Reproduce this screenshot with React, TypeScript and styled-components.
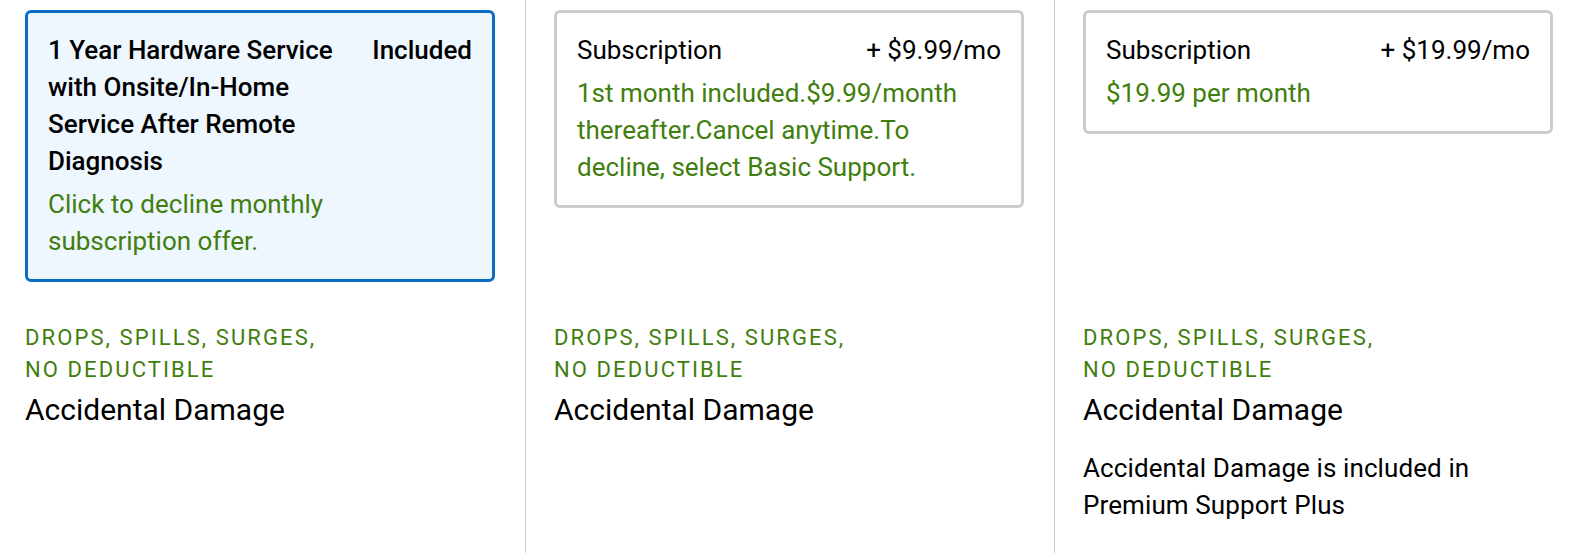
import styled, { createGlobalStyle } from 'styled-components';

const GlobalStyle = createGlobalStyle`
    body {
        margin: 0;
        background: #ffffff;
        font-family: Roboto, 'Liberation Sans', sans-serif;
        color: #000000;
    }
`;

type Plan = {
    title: string;
    price: string;
    note: string;
    selected?: boolean;
    extra?: string;
};

const plans: Plan[] = [
    {
        title: '1 Year Hardware Service with Onsite/In-Home Service After Remote Diagnosis',
        price: 'Included',
        note: 'Click to decline monthly subscription offer.',
        selected: true,
    },
    {
        title: 'Subscription',
        price: '+ $9.99/mo',
        note: '1st month included.$9.99/month thereafter.Cancel anytime.To decline, select Basic Support.',
    },
    {
        title: 'Subscription',
        price: '+ $19.99/mo',
        note: '$19.99 per month',
        extra: 'Accidental Damage is included in Premium Support Plus',
    },
];

const App = () => {
    return (
        <>
            <GlobalStyle />
            <Grid>
                {plans.map((plan, i) => (
                    <TopCell key={'card' + i} $first={i === 0}>
                        <Card $selected={plan.selected}>
                            <CardHeader>
                                <CardTitle $selected={plan.selected}>{plan.title}</CardTitle>
                                <CardPrice $selected={plan.selected}>{plan.price}</CardPrice>
                            </CardHeader>
                            <CardNote>{plan.note}</CardNote>
                        </Card>
                    </TopCell>
                ))}
                {plans.map((plan, i) => (
                    <BottomCell key={'detail' + i} $first={i === 0}>
                        <Tagline>Drops, spills, surges, no deductible</Tagline>
                        <FeatureName>Accidental Damage</FeatureName>
                        {plan.extra && <FeatureText>{plan.extra}</FeatureText>}
                    </BottomCell>
                ))}
            </Grid>
        </>
    );
};

const Grid = styled.div`
    display: grid;
    grid-template-columns: 525px 529px 1fr;
    grid-template-rows: auto 1fr;
    min-height: 100vh;
`;

const Cell = styled.div<{ $first?: boolean }>`
    padding-left: ${({ $first }) => ($first ? '25px' : '28px')};
    border-left: ${({ $first }) => ($first ? 'none' : '1px solid #cfcfcf')};
`;

const TopCell = styled(Cell)`
    padding-top: 10px;
`;

const BottomCell = styled(Cell)`
    padding-top: 40px;
`;

const Card = styled.div<{ $selected?: boolean }>`
    width: 470px;
    box-sizing: border-box;
    padding: 19px 20px;
    border: 3px solid ${({ $selected }) => ($selected ? '#0a6ec3' : '#cccccc')};
    border-radius: 6px;
    background: ${({ $selected }) => ($selected ? '#eef6fe' : '#ffffff')};
`;

const CardHeader = styled.div`
    display: flex;
    justify-content: space-between;
    align-items: flex-start;
    gap: 16px;
`;

const CardTitle = styled.div<{ $selected?: boolean }>`
    font-size: 26px;
    line-height: 37px;
    font-weight: ${({ $selected }) => ($selected ? 500 : 400)};
`;

const CardPrice = styled.div<{ $selected?: boolean }>`
    font-size: 26px;
    line-height: 37px;
    white-space: nowrap;
    font-weight: ${({ $selected }) => ($selected ? 500 : 400)};
`;

const CardNote = styled.div`
    margin-top: 6px;
    font-size: 26px;
    line-height: 37px;
    color: #417e0e;
`;

const Tagline = styled.div`
    max-width: 320px;
    font-size: 22px;
    line-height: 32px;
    letter-spacing: 2.1px;
    text-transform: uppercase;
    color: #417e0e;
`;

const FeatureName = styled.div`
    margin-top: 6px;
    font-size: 30px;
    line-height: 36px;
`;

const FeatureText = styled.div`
    margin-top: 22px;
    max-width: 470px;
    font-size: 26px;
    line-height: 37px;
    letter-spacing: 0.1px;
`;

export default App;
